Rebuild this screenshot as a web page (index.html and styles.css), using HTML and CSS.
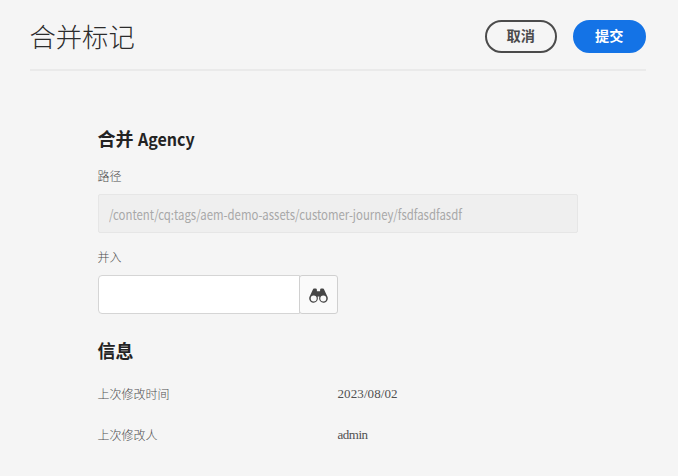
FILE: index.html
```html
<!DOCTYPE html>
<html lang="zh-CN">
<head>
<meta charset="utf-8">
<title>合并标记</title>
<link rel="stylesheet" href="styles.css">
</head>
<body>
<header class="header">
  <h1 class="title">合并标记</h1>
  <div class="actions">
    <button class="button">取消</button>
    <button class="button primary">提交</button>
  </div>
</header>
<main class="form">
  <h2 class="heading">合并 <span class="heading-name">Agency</span></h2>
  <div class="label">路径</div>
  <div class="path"><span class="path-text">/content/cq:tags/aem-demo-assets/customer-journey/fsdfasdfasdf</span></div>
  <div class="label label-into">并入</div>
  <div class="picker">
    <input class="picker-input" type="text" aria-label="并入">
    <button class="picker-button" aria-label="浏览">
      <svg width="19" height="15" viewBox="0 0 19 15">
        <path fill="#464646" fill-rule="evenodd" d="M3.800 1.800Q4 .400 5.300 .400H6.600Q7.800.400 7.900 1.700V3.200h3.200V1.700Q11.200.400 12.400.400H13.700q1.300 0 1.500 1.400l2.900 6.300a4.300 4.300 0 1 1-7.800 1.200V8.500H8.700v.8a4.300 4.300 0 1 1-7.800-1.200ZM4.700 7.400a3 3 0 1 0 0 6a3 3 0 0 0 0-6ZM14.300 7.400a3 3 0 1 0 0 6a3 3 0 0 0 0-6Z"/>
      </svg>
    </button>
  </div>
  <h2 class="heading heading-info">信息</h2>
  <dl class="info">
    <dt>上次修改时间</dt><dd class="date">2023/08/02</dd>
    <dt>上次修改人</dt><dd class="user">admin</dd>
  </dl>
</main>
</body>
</html>
```
FILE: styles.css
```css
* { box-sizing: border-box; }

body {
  margin: 0;
  height: 476px;
  padding: 0 32.5px 0 29.5px;
  background: #f5f5f5;
  color: #2c2c2c;
  font-family: "Noto Sans CJK SC", sans-serif;
  overflow: hidden;
}

.header {
  display: flex;
  align-items: center;
  justify-content: space-between;
  height: 71px;
  padding-top: 3px;
  border-bottom: 2px solid #eaeaea;
}

.title {
  margin: 0;
  font-size: 26.3px;
  font-weight: 300;
  line-height: 40px;
}

.actions { display: flex; gap: 16px; }

.button {
  width: 72.5px;
  height: 33px;
  padding: 0 0 2px;
  border: 2px solid #4b4b4b;
  border-radius: 17px;
  background: transparent;
  color: #4b4b4b;
  font: 700 14.2px/20px "Noto Sans CJK SC", sans-serif;
}

.primary {
  border-color: #1473e6;
  background: #1473e6;
  color: #fff;
}

.form { padding: 53px 0 0 68px; }

.heading {
  margin: 0;
  font-size: 18px;
  font-weight: 700;
  line-height: 28px;
  color: #232323;
}

.heading-name {
  display: inline-block;
  font-size: 17.5px;
  transform: scaleX(.915);
  transform-origin: left center;
}

.label {
  margin-top: 14px;
  color: #505050;
  font-size: 12px;
  font-weight: 300;
  line-height: 18px;
}

.path {
  display: flex;
  align-items: center;
  width: 480px;
  height: 39px;
  margin-top: 9px;
  padding: 0 10px;
  border: 1px solid #e6e6e6;
  border-radius: 2px;
  background: #efefef;
}

/* Condensed lettering for long repository paths */
.path-text {
  color: #a8a8a8;
  font-size: 13.5px;
  white-space: nowrap;
  transform: scaleX(.843);
  transform-origin: left center;
}

.label-into { margin-top: 15px; }

.picker { display: flex; margin-top: 9px; }

.picker-input {
  width: 202px;
  height: 39px;
  border: 1px solid #d5d5d5;
  border-radius: 4px 0 0 4px;
  background: #fff;
}

.picker-button {
  display: flex;
  align-items: center;
  justify-content: center;
  width: 39px;
  height: 39px;
  margin-left: -1px;
  padding: 1px 0 0;
  border: 1px solid #d0d0d0;
  border-radius: 3px;
  background: #fafafa;
}

.heading-info { margin-top: 22px; }

.info {
  display: grid;
  grid-template-columns: 240px 1fr;
  row-gap: 23px;
  margin: 21px 0 0;
  color: #505050;
  font-size: 12px;
  font-weight: 300;
  line-height: 18px;
}

.info dd {
  margin: 0;
  font-family: "Liberation Serif", serif;
  font-size: 13px;
}

.date { letter-spacing: .1px; }

.user { letter-spacing: -.5px; }
```
